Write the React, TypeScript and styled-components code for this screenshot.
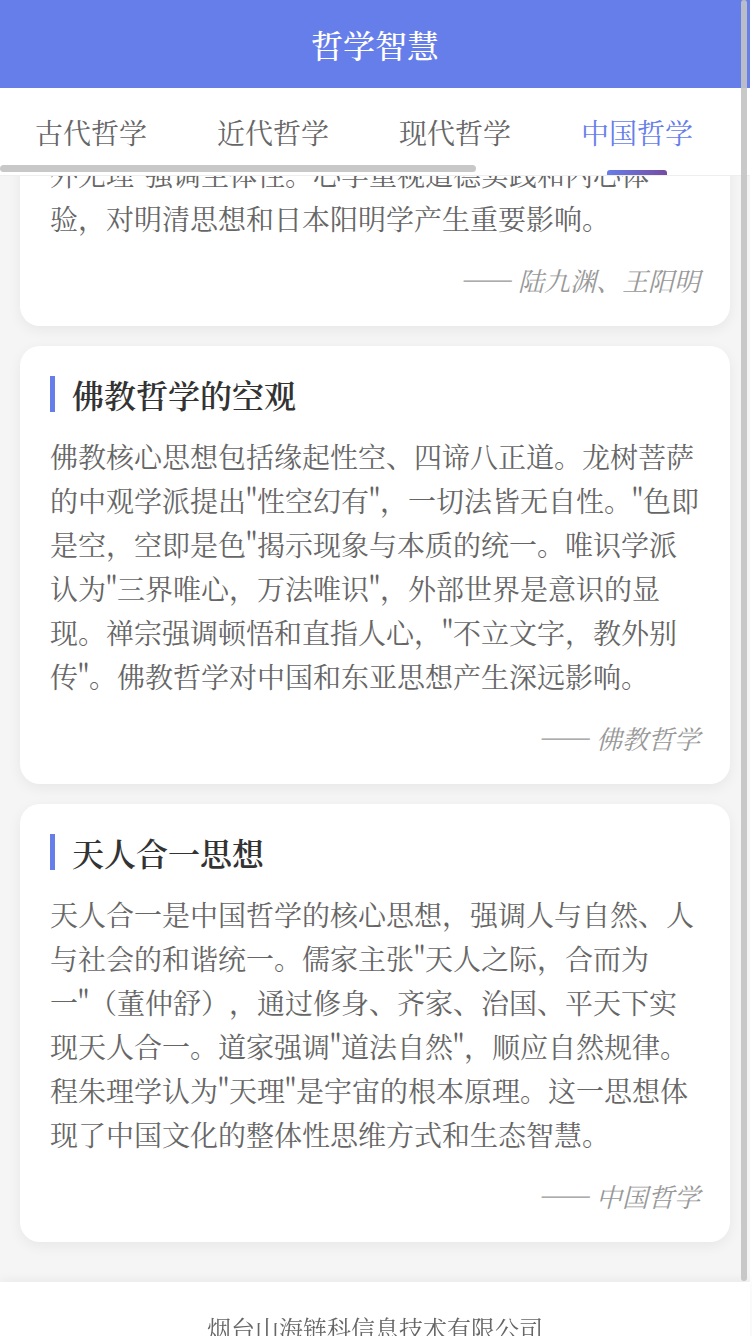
import React, { useLayoutEffect, useRef } from "react"
import styled, { createGlobalStyle } from "styled-components"

const GlobalStyle = createGlobalStyle`
    html, body {
        margin: 0;
        padding: 0;
        background: #ffffff;
        overflow: hidden;
    }
    * {
        box-sizing: border-box;
    }
`

const Page = styled.div`
    position: relative;
    width: 750px;
    font-family: "Noto Serif CJK SC", "Noto Sans CJK SC", serif;
    text-spacing-trim: space-all;
`

const Shell = styled.div`
    height: 1282px;
    display: flex;
    flex-direction: column;
`

const Header = styled.header`
    height: 88px;
    flex-shrink: 0;
    background: #667eea;
    color: #ffffff;
    display: flex;
    align-items: center;
    justify-content: center;
    font-size: 32px;
    font-weight: 500;
`

const TabBar = styled.nav`
    position: relative;
    height: 88px;
    flex-shrink: 0;
    background: #ffffff;
    border-bottom: 1px solid #eeeeee;
`

const TabScroller = styled.div`
    display: flex;
    height: 100%;
    overflow-x: auto;
    scrollbar-width: none;
    &::-webkit-scrollbar {
        display: none;
    }
`

const Tab = styled.div<{ $active?: boolean }>`
    position: relative;
    flex-shrink: 0;
    padding: 2px 35px 0;
    line-height: 85px;
    font-size: 28px;
    white-space: nowrap;
    color: ${props => (props.$active ? "#667eea" : "#666666")};

    &::after {
        content: "";
        display: ${props => (props.$active ? "block" : "none")};
        position: absolute;
        left: 50%;
        bottom: 0;
        width: 60px;
        height: 5px;
        margin-left: -30px;
        border-radius: 3px 3px 0 0;
        background: linear-gradient(90deg, #667eea, #764ba2);
    }
`

/* 滚动条（覆盖在内容上） */
const HThumb = styled.div`
    position: absolute;
    left: 0;
    bottom: 3px;
    width: 476px;
    height: 7px;
    border-radius: 4px;
    background: rgba(190, 190, 190, 0.85);
`

const VThumb = styled.div`
    position: absolute;
    top: 0;
    left: 741px;
    width: 6px;
    height: 1281px;
    border-radius: 3px;
    background: rgba(195, 195, 195, 0.9);
    z-index: 10;
`

const Content = styled.main`
    flex: 1;
    overflow-y: auto;
    background: #f5f5f5;
    padding: 0 20px 40px;
    scrollbar-width: none;
    &::-webkit-scrollbar {
        display: none;
    }
`

const Card = styled.section`
    background: #ffffff;
    border-radius: 20px;
    padding: 30px 30px 28px;
    margin-top: 20px;
    box-shadow: 0 4px 14px rgba(0, 0, 0, 0.06);
`

const CardTitle = styled.h2`
    margin: 0 0 22px;
    padding-left: 17px;
    border-left: 5px solid #667eea;
    font-size: 32px;
    line-height: 36px;
    font-weight: 600;
    color: #333333;
`

const CardText = styled.p`
    margin: 0;
    font-size: 28px;
    line-height: 44px;
    color: #666666;
`

const Author = styled.div`
    margin-top: 22px;
    text-align: right;
    font-size: 26px;
    line-height: 36px;
    font-style: italic;
    color: #999999;
`

const Footer = styled.footer`
    background: #ffffff;
    padding: 28px 0 40px;
    text-align: center;
    font-size: 24px;
    line-height: 36px;
    color: #666666;
    box-shadow: 0 -2px 10px rgba(0, 0, 0, 0.05);
    position: relative;
`

const tabs = ["古代哲学", "近代哲学", "现代哲学", "中国哲学", "西方哲学", "哲学名言"]

const cards = [
    {
        title: "陆王心学",
        text: '陆王心学是宋明理学中与程朱理学并立的重要流派。陆九渊提出"心即理"，王阳明进而主张"心外无物，心外无理"强调主体性。心学重视道德实践和内心体验，对明清思想和日本阳明学产生重要影响。',
        author: "陆九渊、王阳明",
    },
    {
        title: "佛教哲学的空观",
        text: '佛教核心思想包括缘起性空、四谛八正道。龙树菩萨的中观学派提出"性空幻有"，一切法皆无自性。"色即是空，空即是色"揭示现象与本质的统一。唯识学派认为"三界唯心，万法唯识"，外部世界是意识的显现。禅宗强调顿悟和直指人心，"不立文字，教外别传"。佛教哲学对中国和东亚思想产生深远影响。',
        author: "佛教哲学",
    },
    {
        title: "天人合一思想",
        text: '天人合一是中国哲学的核心思想，强调人与自然、人与社会的和谐统一。儒家主张"天人之际，合而为一"（董仲舒），通过修身、齐家、治国、平天下实现天人合一。道家强调"道法自然"，顺应自然规律。程朱理学认为"天理"是宇宙的根本原理。这一思想体现了中国文化的整体性思维方式和生态智慧。',
        author: "中国哲学",
    },
]

const App = () => {
    const listRef = useRef<HTMLElement>(null)

    useLayoutEffect(() => {
        // 滚动到列表底部
        if (listRef.current) {
            listRef.current.scrollTop = listRef.current.scrollHeight
        }
    }, [])

    return (
        <Page lang="zh-CN">
            <GlobalStyle />
            <Shell>
                <Header>哲学智慧</Header>
                <TabBar>
                    <TabScroller>
                        {tabs.map(t => (
                            <Tab key={t} $active={t === "中国哲学"}>{t}</Tab>
                        ))}
                    </TabScroller>
                    <HThumb />
                </TabBar>
                <Content ref={listRef}>
                    {cards.map(c => (
                        <Card key={c.title}>
                            <CardTitle>{c.title}</CardTitle>
                            <CardText>{c.text}</CardText>
                            <Author>—— {c.author}</Author>
                        </Card>
                    ))}
                </Content>
            </Shell>
            <Footer>烟台山海链科信息技术有限公司</Footer>
            <VThumb />
        </Page>
    )
}

export default App
